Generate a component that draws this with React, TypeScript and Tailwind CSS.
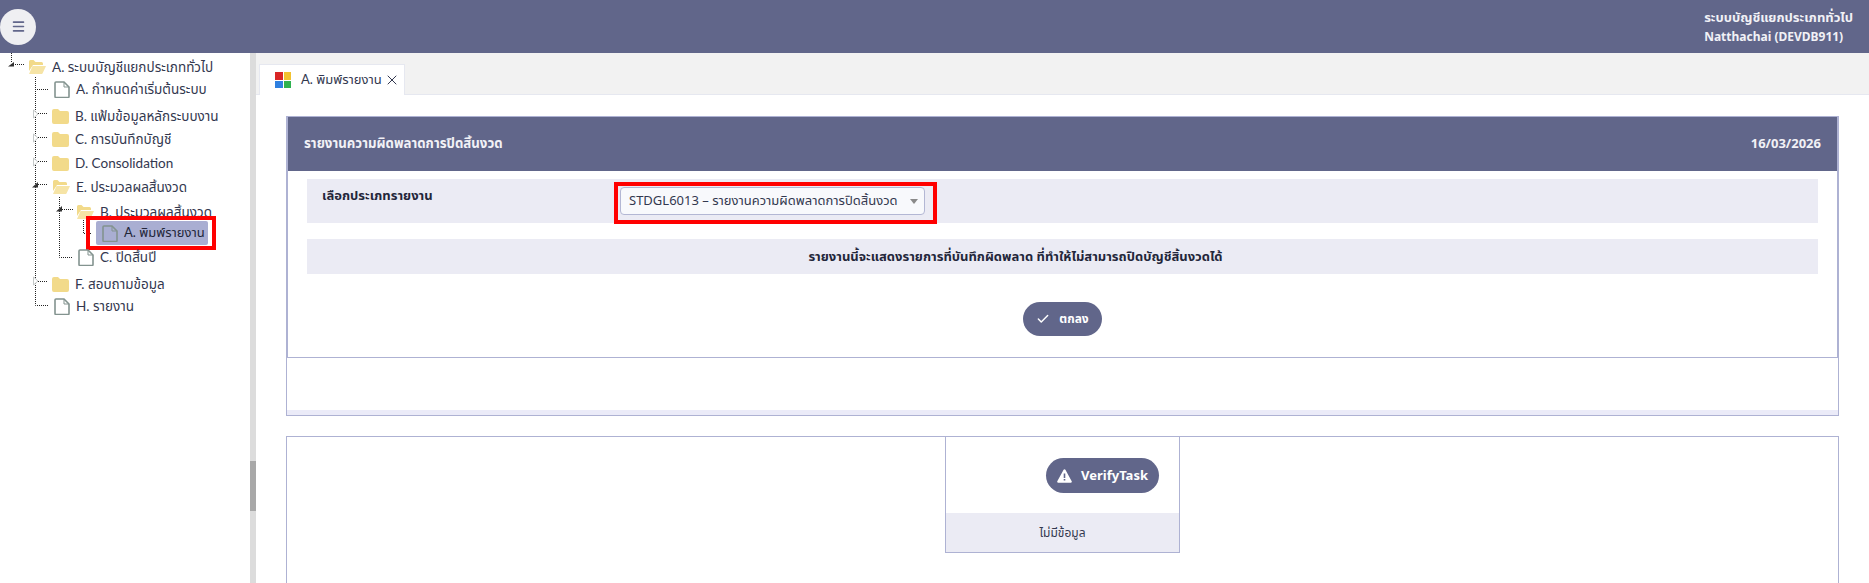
import { Check, Menu, X } from 'lucide-react';

const fontStack = "font-['Noto_Sans','Noto_Sans_Thai','Noto_Sans_CJK_SC',sans-serif]";
const treeFont = "font-['Lato','Noto_Sans_Thai','Noto_Sans',sans-serif]";

const FileIcon = () => (
  <svg width="16" height="17" viewBox="0 0 16 17" fill="none" className="shrink-0">
    <path d="M1 2a1 1 0 0 1 1-1h8l5 5v9.500a1 1 0 0 1-1 1H2a1 1 0 0 1-1-1Z" stroke="#83938f" strokeWidth="1.600" />
    <path d="M10 1v5h5" stroke="#83938f" strokeWidth="1" />
  </svg>
);

const FolderClosed = () => (
  <svg width="17" height="15" viewBox="0 0 17 15" className="shrink-0">
    <path d="M0 2a2 2 0 0 1 2-2h4l2 2h7a2 2 0 0 1 2 2v9a2 2 0 0 1-2 2H2a2 2 0 0 1-2-2Z" fill="#f2da8a" />
  </svg>
);

const FolderOpen = () => (
  <svg width="18" height="14" viewBox="0 0 18 14" className="shrink-0">
    <path d="M1 1.500A1.500 1.500 0 0 1 2.500 0h3l2 2h6A1.500 1.500 0 0 1 15 3.500V5H5L1 11Z" fill="#f2da8a" />
    <path d="M4.500 6H18l-3.500 7.500a1 1 0 0 1-1 .5H1Z" fill="#f6e4a6" />
  </svg>
);

const AlertIcon = () => (
  <svg width="15" height="14" viewBox="0 0 15 14" className="shrink-0">
    <path d="M6.600 .8a1 1 0 0 1 1.800 0l6.300 11.500a1 1 0 0 1-.9 1.500H1.200a1 1 0 0 1-.9-1.500Z" fill="#fff" />
    <path d="M6.700 4.500h1.600v4.500H6.700ZM6.700 10h1.600v1.600H6.700Z" fill="#61668a" />
  </svg>
);

type Kind = 'file' | 'closed' | 'open';

const rows: { label: string; kind: Kind; cls: string; selected?: boolean }[] = [
  { label: 'A. ระบบบัญชีแยกประเภททั่วไป', kind: 'open', cls: 'pl-[28px]' },
  { label: 'A. กำหนดค่าเริ่มต้นระบบ', kind: 'file', cls: 'mt-[2px] pl-[54px]' },
  { label: 'B. แฟ้มข้อมูลหลักระบบงาน', kind: 'closed', cls: 'mt-[7px] pl-[52px]' },
  { label: 'C. การบันทึกบัญชี', kind: 'closed', cls: 'mt-[3px] pl-[52px]' },
  { label: 'D. Consolidation', kind: 'closed', cls: 'mt-[4px] pl-[52px]' },
  { label: 'E. ประมวลผลสิ้นงวด', kind: 'open', cls: 'mt-[4px] pl-[52px]' },
  { label: 'B. ประมวลผลสิ้นงวด', kind: 'open', cls: 'mt-[5px] pl-[76px]' },
  { label: 'A. พิมพ์รายงาน', kind: 'file', cls: 'mt-[1px] pl-[96px]', selected: true },
  { label: 'C. ปิดสิ้นปี', kind: 'file', cls: 'mt-[4px] pl-[78px]' },
  { label: 'F. สอบถามข้อมูล', kind: 'closed', cls: 'mt-[7px] pl-[52px]' },
  { label: 'H. รายงาน', kind: 'file', cls: 'mt-[2px] pl-[54px]' },
];

const TreeLines = () => (
  <svg width="250" height="300" className="absolute left-0 top-0" fill="none">
    <g stroke="#222" strokeDasharray="1 1">
      <path d="M11.500 0V10M15 11.500H24" />
      <path d="M35.500 24V252.500H48" />
      <path d="M37 36.500H48M38 60.500H48M38 84.500H48M38 108.500H48M38 131.500H48M38 228.500H48" />
      <path d="M59.500 144V204.500H73M62 156.500H73" />
      <path d="M83.500 167V180.500H92" />
    </g>
    <path d="M8 13.500L14 9V13.500Z" fill="#333" />
    <path d="M32 134.500L38 129V134.500Z" fill="#333" />
    <path d="M56 158.500L62 153V158.500Z" fill="#333" />
    <g fill="#fff" stroke="#c4c8c8">
      <path d="M33.500 57V65L38 61Z" />
      <path d="M33.500 81V89L38 85Z" />
      <path d="M33.500 105V113L38 109Z" />
      <path d="M33.500 224V232L38 228Z" />
    </g>
  </svg>
);

const Tree = () => (
  <div className={`relative w-[250px] shrink-0 pt-[4px] text-[13.500px] ${treeFont}`}>
    <TreeLines />
    {rows.map((r) => (
      <div key={r.label + r.cls} className={`relative flex h-[20px] items-center ${r.cls}`}>
        {r.selected ? (
          <div className="relative flex h-[24px] w-[112px] items-center gap-[6px] rounded-[2px] bg-[#a9aed2] pl-[6px]">
            <FileIcon />
            <span className="whitespace-nowrap text-[13px] text-[#23263a]">{r.label}</span>
            <div className="absolute -bottom-[5px] -left-[10px] -right-[8px] -top-[5px] border-4 border-[#ff0000]" />
          </div>
        ) : (
          <div className="flex items-center gap-[6px]">
            {r.kind === 'file' && <FileIcon />}
            {r.kind === 'closed' && <FolderClosed />}
            {r.kind === 'open' && <FolderOpen />}
            <span className="whitespace-nowrap text-[#33384f]">{r.label}</span>
          </div>
        )}
      </div>
    ))}
  </div>
);

const Splitter = () => (
  <div className="flex w-[6px] shrink-0 flex-col bg-[#dcdcdc]">
    <div className="h-[408px]" />
    <div className="h-[50px] bg-[#a8a8a8]" />
  </div>
);

const ReportPanel = () => (
  <section className="h-[300px] border border-[#aeb2d3] bg-white">
    <div className="h-[241px] border-x border-b border-[#aeb2d3]">
      <header className="flex h-[54px] items-center justify-between bg-[#61668a] px-[16px] font-bold text-[#f1f1f6]">
        <span className="text-[13.250px]">รายงานความผิดพลาดการปิดสิ้นงวด</span>
        <span className="text-[13px]">16/03/2026</span>
      </header>
      <div className="px-[19px] pt-[8px]">
        <div className="flex h-[44px] bg-[#ebebf4] pl-[15px]">
          <span className="w-[298px] pt-[7px] text-[13px] font-bold text-[#23263a]">เลือกประเภทรายงาน</span>
          <div className="relative mt-[8px] flex h-[28px] w-[305px] items-center justify-between rounded-[4px] border border-[#b3b7d4] bg-[#f8f9fc] pl-[8px] pr-[6px] text-[13px] text-[#33384f]">
            <span className="whitespace-nowrap">STDGL6013 – รายงานความผิดพลาดการปิดสิ้นงวด</span>
            <span className="h-0 w-0 border-x-[4px] border-t-[5px] border-x-transparent border-t-[#8a8a8a]" />
            <div className="absolute -bottom-[10px] -left-[7px] -right-[13px] -top-[6px] border-4 border-[#ff0000]" />
          </div>
        </div>
        <div className="mt-[16px] flex h-[35px] items-center justify-center bg-[#ebebf4] pr-[94px] text-[13px] font-bold text-[#23263a]">
          รายงานนี้จะแสดงรายการที่บันทึกผิดพลาด ที่ทำให้ไม่สามารถปิดบัญชีสิ้นงวดได้
        </div>
        <div className="flex justify-center pt-[28px]">
          <button className="flex h-[34px] w-[79px] items-center justify-center gap-[9px] rounded-full bg-[#61668a] text-[12px] font-bold text-white">
            <Check size={14} strokeWidth={2.500} />
            ตกลง
          </button>
        </div>
      </div>
    </div>
    <div className="mt-[52px] h-[5px] bg-[#ebebf8]" />
  </section>
);

const VerifyPanel = () => (
  <section className="mt-[20px] flex h-[147px] justify-center border-x border-t border-[#aeb2d3] bg-white">
    <div className="h-[116px] w-[235px] border-x border-b border-[#aeb2d3]">
      <div className="flex h-[76px] items-start justify-end pr-[20px] pt-[21px]">
        <button className="flex h-[35px] w-[113px] items-center justify-center gap-[9px] rounded-full bg-[#61668a] text-[13px] font-bold text-white">
          <AlertIcon />
          VerifyTask
        </button>
      </div>
      <div className="flex h-[39px] items-center justify-center bg-[#ebebf4] text-[12px] text-[#33384f]">ไม่มีข้อมูล</div>
    </div>
  </section>
);

export default function App() {
  return (
    <div className={`flex h-[583px] w-[1869px] flex-col overflow-hidden bg-white ${fontStack}`}>
      <header className="flex h-[53px] shrink-0 items-center justify-between bg-[#61668a] pr-[16px]">
        <button className="flex h-[36px] w-[36px] items-center justify-center rounded-full bg-[#efeff2] text-[#61668a]">
          <Menu size={15} strokeWidth={2.500} />
        </button>
        <div className="font-bold leading-[19px] text-[#f1f1f6]">
          <div className="text-[13px]">ระบบบัญชีแยกประเภททั่วไป</div>
          <div className="text-[12px]">Natthachai (DEVDB911)</div>
        </div>
      </header>
      <div className="flex min-h-0 flex-1">
        <Tree />
        <Splitter />
        <main className="flex min-w-0 flex-1 flex-col">
          <div className="flex h-[42px] shrink-0 items-end border-b border-[#e6e8f0] bg-[#f2f2f2] pl-[3px]">
            <div className={`-mb-px flex h-[31px] w-[146px] items-center border-x border-t border-[#e6e8f0] bg-white pl-[15px] text-[13px] text-[#33384f] ${treeFont}`}>
              <span className="grid h-[16px] w-[16px] shrink-0 grid-cols-2 gap-[1px]">
                <span className="bg-[#d92626]" />
                <span className="bg-[#f2c230]" />
                <span className="bg-[#2f80e0]" />
                <span className="bg-[#2eb24f]" />
              </span>
              <span className="ml-[10px] w-[83px] whitespace-nowrap">A. พิมพ์รายงาน</span>
              <X size={16} strokeWidth={1.500} className="shrink-0" />
            </div>
          </div>
          <div className="px-[30px] pt-[21px]">
            <ReportPanel />
            <VerifyPanel />
          </div>
        </main>
      </div>
    </div>
  );
}
